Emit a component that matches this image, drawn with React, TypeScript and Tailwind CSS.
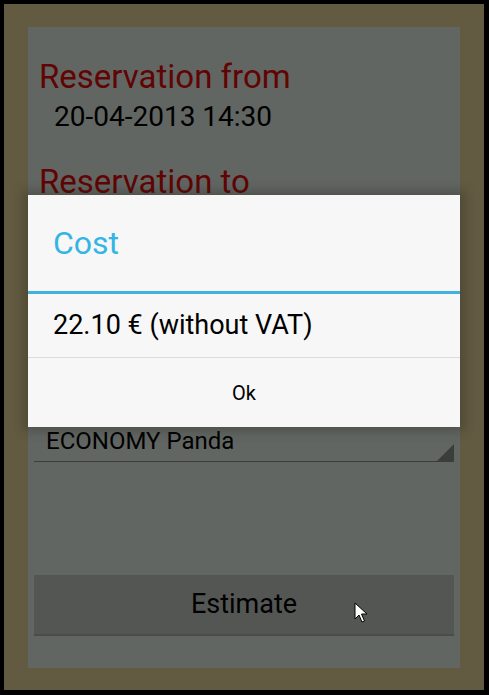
import React from 'react';

const font = { fontFamily: 'Roboto, "Noto Sans", sans-serif' };

const Cursor: React.FC = () => (
  <svg width="14" height="22" viewBox="0 0 14 22" className="absolute left-[354px] top-[602px]">
    <path d="M1 1 L1 17 L5 13 L8 20 L10.5 19 L7.5 12 L13 12 Z" fill="#fff" stroke="#000" strokeWidth="1" />
  </svg>
);

const App: React.FC = () => {
  return (
    <div className="relative w-[489px] h-[695px] bg-black pt-[4px] pl-[4px] pr-[5px] pb-[5px]" style={font}>
      <div className="w-full h-full bg-[#625a41] pt-[23px] pl-[24px] pr-[24px] pb-[22px]">
        <div className="w-full h-full bg-[#626663] flex flex-col px-[6px]">
          <div className="mt-[30px] pl-[5px] text-[33px] leading-[40px] text-[#600404]">Reservation from</div>
          <div className="mt-[3px] pl-[20px] text-[28px] leading-[34px] text-black">20-04-2013 14:30</div>
          <div className="mt-[28px] pl-[5px] text-[33px] leading-[40px] text-[#600404]">Reservation to</div>
          {/* covered by the dialog */}
          <div className="h-[224px]" />
          <div className="relative h-[36px] border-b border-[#3c3e3c]">
            <div className="pl-[12px] text-[24px] leading-[30px] text-black">ECONOMY Panda</div>
            <div className="absolute right-0 bottom-0 w-0 h-0 border-l-[17px] border-l-transparent border-b-[17px] border-b-[#3b3d3b]" />
          </div>
          <button className="mt-[113px] h-[61px] w-full bg-[#545654] border-b-2 border-[#4a4c4a] text-[27px] text-black">
            Estimate
          </button>
        </div>
      </div>

      <div className="absolute left-[28px] top-[195px] w-[432px] h-[232px] bg-[#f7f7f7] flex flex-col shadow-[0_0_10px_4px_rgba(40,40,30,0.35)]">
        <div className="h-[96px] flex items-center pl-[25px] text-[32px] text-[#33b5e5]">Cost</div>
        <div className="h-[3px] bg-[#3fb3de]" />
        <div className="h-[63px] flex items-center pl-[25px] text-[27px] text-black">22.10 € (without VAT)</div>
        <div className="h-px bg-[#dcdcdc]" />
        <div className="flex-1 flex items-center justify-center text-[20px] text-black">Ok</div>
      </div>

      <Cursor />
    </div>
  );
};

export default App;
